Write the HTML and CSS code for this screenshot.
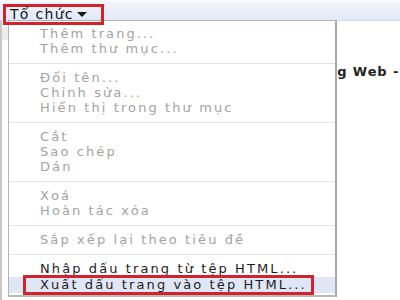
FILE: index.html
```html
<!DOCTYPE html>
<html lang="vi">
<head>
<meta charset="utf-8">
<link rel="stylesheet" href="styles.css">
</head>
<body>
<div class="window">
  <div class="toolbar">
    <div class="organize">Tổ chức <span class="caret"></span></div>
  </div>
  <div class="main">
    <div class="side"><div class="side-tab"></div></div>
    <div class="content">
      <div class="title-line">Quản lý dấu trang Web -</div>
    </div>
  </div>
  <div class="menu">
    <div class="item off">Thêm trang...</div>
    <div class="item off">Thêm thư mục...</div>
    <div class="sep"></div>
    <div class="item off">Đổi tên...</div>
    <div class="item off">Chỉnh sửa...</div>
    <div class="item off">Hiển thị trong thư mục</div>
    <div class="sep"></div>
    <div class="item off">Cắt</div>
    <div class="item off">Sao chép</div>
    <div class="item off">Dán</div>
    <div class="sep"></div>
    <div class="item off">Xoá</div>
    <div class="item off">Hoàn tác xóa</div>
    <div class="sep"></div>
    <div class="item off">Sắp xếp lại theo tiêu đề</div>
    <div class="sep"></div>
    <div class="item">Nhập dấu trang từ tệp HTML...</div>
    <div class="item hover"><span class="mark">Xuất dấu trang vào tệp HTML...</span></div>
  </div>
</div>
</body>
</html>
```

FILE: styles.css
```css
*, *::before, *::after { box-sizing: border-box; }
html, body { margin: 0; padding: 0; }
body {
  width: 400px;
  height: 300px;
  overflow: hidden;
  background: #ffffff;
  font-family: "DejaVu Sans", Verdana, sans-serif;
}
.window {
  position: relative;
  width: 400px;
  height: 300px;
}
.toolbar {
  height: 21px;
  padding: 2px 0 0 3px;
  background: linear-gradient(#f0f4fb, #e2e9f6);
  border-top: 2px solid #fafbfd;
  border-bottom: 1px solid #d3dbe8;
}
.organize {
  display: inline-flex;
  align-items: center;
  gap: 3px;
  width: 101px;
  height: 21px;
  margin-top: -2px;
  padding-left: 4px;
  border: 3px solid #d2232c;
  font-size: 14px;
  letter-spacing: 1.3px;
  color: #161616;
  position: relative;
  z-index: 3;
}
.caret {
  width: 0;
  height: 0;
  border-left: 5px solid transparent;
  border-right: 5px solid transparent;
  border-top: 5px solid #161616;
}
.main {
  display: flex;
  height: 279px;
}
.side {
  width: 8px;
  border-left: 2px solid #c8c8c8;
  padding-top: 6px;
}
.side-tab {
  height: 13px;
  background: #ececec;
}
.content {
  flex: 1;
  padding: 43px 0 0 192px;
}
.title-line {
  font-size: 13px;
  font-weight: bold;
  letter-spacing: 0.9px;
  color: #222;
  white-space: nowrap;
}
.menu {
  position: absolute;
  left: 8px;
  top: 20px;
  width: 329px;
  height: 277px;
  background: #ffffff;
  border: 1px solid #b4b4b4;
  border-right: 2px solid #a8a8a8;
  border-bottom: 2px solid #b8b8b8;
  padding-top: 5px;
  z-index: 2;
}
.item {
  height: 15px;
  line-height: 15px;
  padding-left: 31px;
  font-size: 13px;
  letter-spacing: 2.1px;
  color: #1c1c1c;
  white-space: nowrap;
}
.item.off { color: #a3a3a3; }
.sep {
  height: 1px;
  margin: 7px 0 6px;
  background: #e4e4e4;
}
.item.hover {
  height: 16px;
  margin-top: 1px;
  background: #dfe7f6;
  position: relative;
}
.mark {
  display: inline-block;
}
.item.hover::after {
  content: "";
  position: absolute;
  left: 14px;
  top: -2px;
  width: 291px;
  height: 20px;
  border: 3px solid #d2232c;
}
```
